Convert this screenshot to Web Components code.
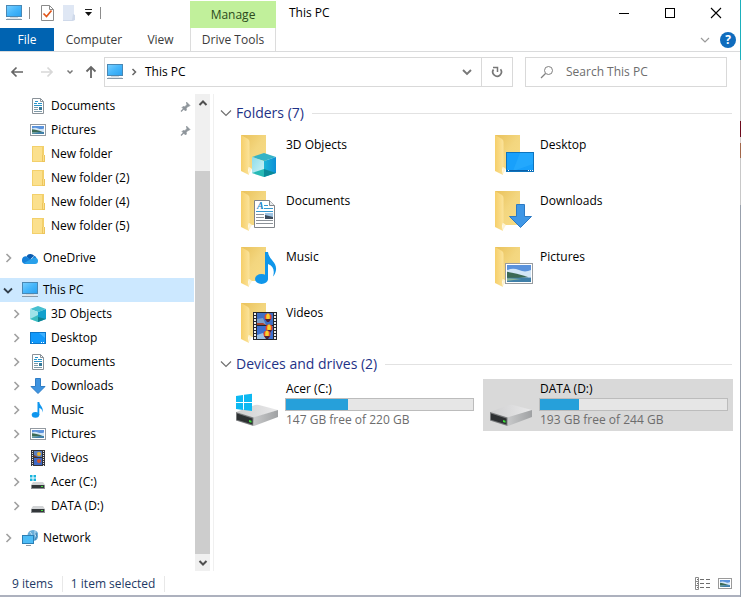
<!DOCTYPE html>
<html lang="en">
<head>
<meta charset="utf-8">
<title>This PC</title>
<style>
  body { margin: 0; background: #fff; font: 12px/16px "Open Sans", "Noto Sans", sans-serif; color: #000; }
</style>
</head>
<body>
<explorer-window>
  <title-bar slot="title" heading="This PC"></title-bar>
  <ribbon-tabs slot="ribbon"></ribbon-tabs>
  <address-row slot="address" place="This PC"></address-row>

  <nav-pane slot="nav">
    <nav-group>
      <nav-item level="2" icon="documents" pinned>Documents</nav-item>
      <nav-item level="2" icon="pictures" pinned>Pictures</nav-item>
      <nav-item level="2" icon="folder">New folder</nav-item>
      <nav-item level="2" icon="folder">New folder (2)</nav-item>
      <nav-item level="2" icon="folder">New folder (4)</nav-item>
      <nav-item level="2" icon="folder">New folder (5)</nav-item>
    </nav-group>
    <nav-group>
      <nav-item icon="onedrive" state="closed">OneDrive</nav-item>
    </nav-group>
    <nav-group>
      <nav-item icon="pc" state="open" selected>This PC</nav-item>
      <nav-item level="2" icon="objects" state="closed">3D Objects</nav-item>
      <nav-item level="2" icon="desktop" state="closed">Desktop</nav-item>
      <nav-item level="2" icon="documents" state="closed">Documents</nav-item>
      <nav-item level="2" icon="downloads" state="closed">Downloads</nav-item>
      <nav-item level="2" icon="music" state="closed">Music</nav-item>
      <nav-item level="2" icon="pictures" state="closed">Pictures</nav-item>
      <nav-item level="2" icon="videos" state="closed">Videos</nav-item>
      <nav-item level="2" icon="sysdrive" state="closed">Acer (C:)</nav-item>
      <nav-item level="2" icon="drive" state="closed">DATA (D:)</nav-item>
    </nav-group>
    <nav-group>
      <nav-item icon="network" state="closed">Network</nav-item>
    </nav-group>
  </nav-pane>

  <item-group heading="Folders (7)">
    <folder-tile icon="objects-lg">3D Objects</folder-tile>
    <folder-tile icon="desktop-lg">Desktop</folder-tile>
    <folder-tile icon="documents-lg">Documents</folder-tile>
    <folder-tile icon="downloads-lg">Downloads</folder-tile>
    <folder-tile icon="music-lg">Music</folder-tile>
    <folder-tile icon="pictures-lg">Pictures</folder-tile>
    <folder-tile icon="videos-lg">Videos</folder-tile>
  </item-group>
  <item-group heading="Devices and drives (2)">
    <drive-tile icon="sysdrive-lg" used="33">Acer (C:)<span slot="info">147 GB free of 220 GB</span></drive-tile>
    <drive-tile icon="drive-lg" used="21" selected>DATA (D:)<span slot="info">193 GB free of 244 GB</span></drive-tile>
  </item-group>

  <status-bar slot="status"><span>9 items</span><span>1 item selected</span></status-bar>
</explorer-window>

<script>
const folderBack = `
  <defs>
    <linearGradient id="fb" x1="0" y1="0" x2="1" y2="1"><stop offset="0" stop-color="#e9c15a"/><stop offset=".5" stop-color="#f3d67f"/><stop offset="1" stop-color="#f8dc86"/></linearGradient>
    <linearGradient id="ff" x1="0" y1="0" x2="1" y2="0"><stop offset="0" stop-color="#f6cf69"/><stop offset="1" stop-color="#fbe39b"/></linearGradient>
  </defs>
  <path d="M8 5H33V39H16z" fill="url(#fb)"/>
  <path d="M15 36l4 3-3 5z" fill="#fdf4d4"/>
  <path d="M8 5l7 4q1.500 1 1.500 3V36q-1.500 1-1.500 4l1 5-8-4z" fill="url(#ff)"/>`;

const driveBody = `
  <defs>
    <linearGradient id="dt" x1="0" y1="0" x2="1" y2="0"><stop offset="0" stop-color="#cfcfd0"/><stop offset="1" stop-color="#e9e9ea"/></linearGradient>
    <linearGradient id="ds" x1="0" y1="0" x2="1" y2="0"><stop offset="0" stop-color="#c9cacb"/><stop offset="1" stop-color="#9fa1a3"/></linearGradient>
  </defs>
  <path d="M3 31L22 24Q24 23.500 26 24L45 29 21 37z" fill="url(#dt)"/>
  <path d="M20 36.500L45 29V36L21 45z" fill="url(#ds)"/>
  <path d="M3 31L20.500 36.500V45L3 39.500z" fill="#77797b"/>
  <path d="M4 32.500L19.500 37.500V43.500L4 38.700z" fill="#2d3032"/>
  <path d="M16 39l2.500.8v2L16 41z" fill="#3fe03a"/>`;

const picScene = (x, y, w, h) => `
  <rect x="${x}" y="${y}" width="${w}" height="${h}" fill="#5b93dc"/>
  <path d="M${x} ${y + h * .3}q${w * .25} ${-h * .15} ${w * .5} 0t${w * .5} 0v${h * .45}h${-w}z" fill="#d3e6f7"/>
  <path d="M${x} ${y + h * .4}q${w * .3} ${h * .05} ${w * .9} ${h * .32}l${-w * .9} ${h * .1}z" fill="#3c6a55"/>
  <path d="M${x} ${y + h * .75}h${w}v${h * .25}h${-w}z" fill="#3f7fa8"/>
  <path d="M${x} ${y + h * .78}l${w * .6} ${h * .05}l${-w * .6} ${h * .1}z" fill="#8fb79c"/>`;

const smallDrive = `
  <path d="M3 8h10l2 3H1z" fill="#d2d4d6"/>
  <rect x="1" y="11" width="14" height="4" fill="#8e9194"/>
  <rect x="2" y="11" width="12" height="3" fill="#33373a"/>
  <rect x="11" y="12" width="2" height="1" fill="#42e03c"/>`;

const balloon = (x, y) => `
  <circle cx="${x}" cy="${y}" r="3.500" fill="#e8462b"/>
  <ellipse cx="${x}" cy="${y}" rx="1.800" ry="3.500" fill="#f7d22c"/>
  <path d="M${x - 3} ${y + 2}L${x - 1} ${y + 5}H${x + 1}L${x + 3} ${y + 2}z" fill="#4b2138"/>`;

const ICONS = {
  pc: [16, 16, `
    <defs><linearGradient id="g" x1="0" y1="0" x2="1" y2="1"><stop offset="0" stop-color="#7bd0ff"/><stop offset=".5" stop-color="#45b6fb"/><stop offset="1" stop-color="#2aa1f0"/></linearGradient></defs>
    <rect x=".5" y=".5" width="15" height="11" fill="url(#g)" stroke="#4a88b4"/>
    <path d="M4 12.500h8" stroke="#cfd8df"/><path d="M1 13.500h14" stroke="#dfe5ea"/><path d="M0 14.500h16" stroke="#8799a8"/>`],
  check: [16, 18, `
    <path d="M2.500 1.500h8l4 4v11h-12z" fill="#fff" stroke="#8b8b8b"/><path d="M10.500 1.500v4h4" fill="none" stroke="#8b8b8b"/>
    <path d="M4.500 9.500l3 3 5-6" fill="none" stroke="#e2571b" stroke-width="1.700"/>`],
  blank: [16, 18, `
    <path d="M2 1h11v13l-1 2H2z" fill="#dfe7f4"/><path d="M12 10l2 1v5l-2 1H2v-1h9z" fill="#cfd9ea"/>`],
  custom: [9, 8, `<path d="M1 .5h7" stroke="#222"/><path d="M1 3h7L4.500 7z" fill="#111"/>`],
  min: [12, 12, `<path d="M1 6.500h10" stroke="#000"/>`],
  max: [12, 12, `<rect x="1.500" y="1.500" width="9" height="9" fill="none" stroke="#000"/>`],
  close: [12, 12, `<path d="M1 1l10 10M11 1L1 11" stroke="#000" stroke-width="1.100"/>`],
  back: [14, 12, `<path d="M13 6H2M6.500 1.500L2 6l4.500 4.500" fill="none" stroke="#666" stroke-width="1.700"/>`],
  forward: [14, 12, `<path d="M1 6h11M7.500 1.500L12 6l-4.500 4.500" fill="none" stroke="#d8d8d8" stroke-width="1.700"/>`],
  up: [12, 14, `<path d="M6 13V2M1.500 6.500L6 2l4.500 4.500" fill="none" stroke="#666" stroke-width="1.800"/>`],
  tinydown: [8, 6, `<path d="M1.500 1.500L4 4l2.500-2.500" fill="none" stroke="#777" stroke-width="1.500"/>`],
  down: [10, 8, `<path d="M1 2l4 4 4-4" fill="none" stroke="#777" stroke-width="1.900"/>`],
  downlight: [10, 8, `<path d="M1 2l4 4 4-4" fill="none" stroke="#9a9a9a" stroke-width="1.200"/>`],
  refresh: [12, 12, `<path d="M2.500 3.500A4.300 4.300 0 1 0 9.500 3.300" fill="none" stroke="#777" stroke-width="1.700"/><path d="M2 1.500h4.500V6" fill="none" stroke="#777" stroke-width="1.500"/>`],
  search: [14, 14, `<circle cx="8.500" cy="5.500" r="4" fill="none" stroke="#808080"/><path d="M5.500 8.500L1 13" stroke="#808080" stroke-width="1.200"/>`],
  crumb: [6, 8, `<path d="M1.500 1L4.500 4l-3 3" fill="none" stroke="#666" stroke-width="1.500"/>`],
  closed: [7, 10, `<path d="M1.500 1L5.500 5l-4 4" fill="none" stroke="#a0a0a0" stroke-width="1.600"/>`],
  open: [10, 7, `<path d="M1 1.500l4 4 4-4" fill="none" stroke="#333f4b" stroke-width="1.800"/>`],
  group: [12, 8, `<path d="M1 1.500l5 5 5-5" fill="none" stroke="#707070" stroke-width="1.200"/>`],
  scrollup: [10, 8, `<path d="M1.500 6L5 2.500 8.500 6" fill="none" stroke="#505050" stroke-width="2"/>`],
  scrolldown: [10, 8, `<path d="M1.500 2L5 5.500 8.500 2" fill="none" stroke="#505050" stroke-width="2"/>`],
  pin: [11, 11, `<path d="M6.500 1L10 4.500l-1 1-.7-.3-2 2 .2 1.800-1 1L2 6.500l1-1 1.800.2 2-2-.3-1.700z" fill="#8e959b" stroke="#8e959b" stroke-width=".6"/><path d="M4 7.500L1 10.500" stroke="#8e959b" stroke-width="1.200"/>`],
  folder: [16, 16, `<rect x="2" y="0" width="12" height="16" fill="#f3d06b"/><rect x="3" y="1" width="9" height="14" fill="#fbe08d"/><path d="M12 9h3v7h-3z" fill="#edc55c"/><path d="M13.500 9v6" stroke="#fbe08d"/>`],
  documents: [16, 16, `<path d="M2.500 .5h8l3 3v12h-11z" fill="#fff" stroke="#8a9299"/><path d="M10.500 .5v3h3" fill="none" stroke="#8a9299"/>
    <path d="M5 3.500h3M4 5.500h3M8 5.500h4M4 7.500h8" stroke="#2a94c9"/><path d="M4 9.500h4M4 11.500h4M4 13.500h8" stroke="#7f9aa8"/><rect x="9" y="9" width="3" height="3" fill="#35799a"/>`],
  pictures: [16, 16, `<rect x=".5" y="2.500" width="15" height="11" fill="#fff" stroke="#939aa1"/>${picScene(2, 4, 12, 8)}`],
  onedrive: [16, 16, `<path d="M4.500 6.500a4.300 4.300 0 0 1 7.500-.7l-4 4z" fill="#0a5cb0"/><path d="M12 5.800a3.600 3.600 0 0 1 2.500 2.400L9 11z" fill="#1478d0"/><path d="M0 10a3.500 3.500 0 0 1 4.500-3.500L11 11l-3 3H3.500A3.700 3.700 0 0 1 0 10z" fill="#1580d8"/><path d="M2 13l9-5a3.300 3.300 0 0 1 5 3 3 3 0 0 1-3 3H4z" fill="#28a0ea"/>`],
  objects: [16, 16, `<path d="M0 3l8-3 8 3-8 3z" fill="#46bfd0"/><path d="M0 3l8 3v10l-8-3z" fill="#9fe3e8"/><path d="M0 13l8-4v7z" fill="#3bbcc0"/><path d="M8 6l8-3v10l-8 3z" fill="#12a0cc"/><path d="M8 16v-5l8 2z" fill="#0e8492"/>`],
  desktop: [16, 16, `<rect x=".5" y="2.500" width="15" height="11" fill="#1199fb" stroke="#0b76c9"/><path d="M9 3h6v5z" fill="#3db0ff"/><path d="M2 12.500h1M11 12.500h1M13 12.500h1" stroke="#fff"/>`],
  downloads: [16, 16, `<path d="M5.500 .5h5v8h4.500L8 15.500 1 8.500h4.500z" fill="#3f94e0" stroke="#2f7dc6"/>`],
  music: [16, 16, `<ellipse cx="5.500" cy="12.800" rx="3.800" ry="2.900" fill="#0f96ee"/><path d="M7.500 0h1.800C9.500 3.500 14 5 12.500 10.500 12.300 7.500 11 6.500 9.300 6V13H7.500z" fill="#0f96ee"/>`],
  videos: [16, 16, `<rect x="1" y="0" width="14" height="16" fill="#33343a"/><rect x="4" y="1" width="8" height="6" fill="#5b7fbf"/><rect x="4" y="8" width="8" height="7" fill="#3f69c4"/><circle cx="9" cy="4" r="2" fill="#e9b32c"/><circle cx="9" cy="11" r="2" fill="#d2562b"/><path d="M4 5l4 2H4z" fill="#7d3f2e"/><path d="M2.500 1v15M13.500 1v15" stroke="#e8e8e8" stroke-dasharray="1 1"/>`],
  drive: [16, 16, smallDrive],
  sysdrive: [16, 16, `<path d="M0 1h2.500v2.500H0zM3.500 1H6v2.500H3.500zM0 4.500h2.500V7H0zM3.500 4.500H6V7H3.500z" fill="#18b4dd"/>${smallDrive}`],
  network: [16, 16, `<circle cx="11" cy="5.500" r="5.500" fill="#6aaed9"/><path d="M8 2q3 2 1 5M13 1q-1 4 2 7" fill="none" stroke="#c4e2f3"/><path d="M14 3q2 4-1 7" fill="none" stroke="#3c7fae"/><rect x=".5" y="5.500" width="11" height="8" fill="#4dbcf6" stroke="#2c7fb4"/><path d="M4 15.500h5" stroke="#8b98a3"/>`],
  details: [17, 14, `<path d="M1.500 .5h3v12h-3zM1 4.500h4M1 8.500h4" fill="none" stroke="#8c8c8c"/><path d="M3 2.500h1M3 6.500h1M3 10.500h1M6 2.500h4M12 2.500h4M6 6.500h4M12 6.500h4M6 10.500h4M12 10.500h4" stroke="#6e6e6e"/>`],
  thumbs: [14, 14, `<rect x=".5" y="1.500" width="13" height="10" fill="#fff" stroke="#9a9a9a"/>${picScene(2, 3, 10, 7)}`],

  "objects-lg": [48, 48, `${folderBack}
    <defs><linearGradient id="cl" x1="0" y1="0" x2="1" y2="1"><stop offset="0" stop-color="#8edceb"/><stop offset="1" stop-color="#d2f5f6"/></linearGradient><linearGradient id="cr" x1="0" y1="0" x2="1" y2="0"><stop offset="0" stop-color="#1cb5d8"/><stop offset="1" stop-color="#0c8fd6"/></linearGradient></defs>
    <path d="M19 27l12-4 12 4-12 4z" fill="#35b3c6"/><path d="M19 27l12 4v16l-12-4z" fill="url(#cl)"/><path d="M31 31l12-4v16l-12 4z" fill="url(#cr)"/><path d="M19 43l12-4v8z" fill="#27b9b5"/><path d="M31 39l12 4-12 4z" fill="#0a8a98"/>`],
  "documents-lg": [48, 48, `${folderBack}
    <path d="M21.500 14.500h15l5 5v22h-20z" fill="#fff" stroke="#808489"/><path d="M36.500 14.500v5h5" fill="#e8eaec" stroke="#808489"/>
    <text x="24" y="23" font-family="Liberation Serif, serif" font-style="italic" font-weight="700" font-size="10" fill="#1a86c8">A</text>
    <path d="M31 19.500h4M31 22.500h9M23 25.500h17" stroke="#3498cf"/>
    <path d="M23 28.500h8M23 31.500h8M23 34.500h17M23 37.500h17" stroke="#8c9298"/>
    <rect x="32" y="27" width="8" height="6" fill="#9ec3e2"/><path d="M32 29l8 2v2h-8z" fill="#3c4c5c"/>`],
  "desktop-lg": [48, 48, `${folderBack}
    <rect x="19.500" y="22.500" width="27" height="19" fill="#18a0fb" stroke="#0d74be"/><path d="M33 23h13v11L26 41z" fill="#2badff" opacity=".6"/><path d="M20 40.500h26" stroke="#0a5fa8"/><path d="M21 40.500h1M41 40.500h1M43 40.500h1M45 40.500h1" stroke="#fff"/>`],
  "downloads-lg": [48, 48, `${folderBack}
    <path d="M29.500 18.500h8v12h7L33.500 41.500 22.500 30.500h7z" fill="#3f97e6" stroke="#2c7ac4"/>`],
  "music-lg": [48, 48, `${folderBack}
    <ellipse cx="28.500" cy="37" rx="6.500" ry="5" fill="#0f96ea"/><path d="M32 10h3C36 18 44 20 43 28 42.500 31 41.500 33 40 34.500 42 28 40 24 35 22V37.500h-3z" fill="#0f96ea"/>`],
  "pictures-lg": [48, 48, `${folderBack}
    <rect x="18.500" y="21.500" width="27" height="20" fill="#fff" stroke="#989ca0"/>${picScene(20, 23, 24, 17)}`],
  "videos-lg": [48, 48, `${folderBack}
    <rect x="20" y="14" width="24" height="28" fill="#24262c"/><rect x="24" y="15" width="16" height="12" fill="#3f6fc4"/><rect x="24" y="28" width="16" height="13" fill="#3b6fd0"/>
    <path d="M24 21l6-1 3 7H24z" fill="#7b9fc9"/><path d="M24 37l6-2 5 6H24z" fill="#9cc0e4"/><path d="M24 25h6l3 2h-9z" fill="#a8442e"/>${balloon(35, 19)}${balloon(36, 30)}${balloon(34, 36)}
    <path d="M22 15v27M42 15v27" stroke="#eeeeee" stroke-width="2" stroke-dasharray="2 1"/>`],
  "drive-lg": [48, 48, driveBody],
  "sysdrive-lg": [48, 48, `${driveBody}<path d="M3 15l7-1v7H3zM11 13.800l8-1V21h-8zM3 22h7v7l-7-1zM11 22h8v8l-8-1z" fill="#0db9f2"/>`],
};

function define(name, template, setup) {
  customElements.define(name, class extends HTMLElement {
    constructor() { super(); this.attachShadow({ mode: "open" }); }
    connectedCallback() {
      if (this.shadowRoot.childNodes.length) return;
      this.shadowRoot.innerHTML = `<style>:host,*{box-sizing:border-box}button{font:inherit;color:inherit;background:none;border:0;padding:0;margin:0;cursor:pointer}</style>` + template(this);
      if (setup) setup(this);
    }
  });
}

define("ui-icon", el => {
  const [w, h, art] = ICONS[el.getAttribute("name")];
  return `<style>:host{display:block;flex:none}svg{display:block}</style>
    <svg width="${w}" height="${h}" viewBox="0 0 ${w} ${h}" aria-hidden="true">${art}</svg>`;
});

define("explorer-window", () => `
  <style>
    :host { display: grid; grid-template-columns: minmax(0,1fr) 1px; min-height: 100vh; }
    .frame { display: flex; flex-direction: column; background: #fff; border-bottom: 2px solid #adb1be; }
    .edge { background: linear-gradient(#1bb0bd 0 60px, #c8c8c8 60px 121px, #6d0a1c 121px 137px, #d8d0d0 137px 143px, #a2674a 143px 158px, #c8c8c8 158px 205px, #98a0ac 205px); }
    .body { flex: 1; display: grid; grid-template-columns: 214px minmax(0,1fr); padding-top: 2px; }
    main { padding: 4px 7px 0 15px; display: flex; flex-direction: column; gap: 1px; }
  </style>
  <div class="frame">
    <slot name="title"></slot>
    <slot name="ribbon"></slot>
    <slot name="address"></slot>
    <div class="body"><slot name="nav"></slot><main><slot></slot></main></div>
    <slot name="status"></slot>
  </div>
  <div class="edge"></div>`);

define("title-bar", el => `
  <style>
    :host { display: flex; height: 28px; }
    .quick { display: flex; align-items: center; width: 190px; padding: 0 0 2px 6px; }
    .sep { width: 1px; height: 12px; background: #8c8c8c; }
    .context { width: 86px; margin-top: 1px; padding-top: 1px; background: #c1f09b; color: #2c4a1c; text-align: center; line-height: 26px; }
    h1 { flex: 1; margin: 0; padding-left: 13px; font: inherit; line-height: 26px; }
    .caption { display: flex; height: 25px; padding-right: 1px; }
    .caption button { width: 46px; display: grid; place-items: center; }
    .a { margin: 0 9px 0 7px; } .b { margin-right: 6px; } .c { margin: 0 7px 0 7px; }
  </style>
  <div class="quick">
    <ui-icon name="pc"></ui-icon><span class="sep a"></span>
    <button class="b" aria-label="Properties"><ui-icon name="check"></ui-icon></button>
    <button aria-label="New folder"><ui-icon name="blank"></ui-icon></button>
    <button class="c" aria-label="Customize Quick Access Toolbar"><ui-icon name="custom"></ui-icon></button>
    <span class="sep"></span>
  </div>
  <div class="context">Manage</div>
  <h1>${el.getAttribute("heading")}</h1>
  <div class="caption">
    <button aria-label="Minimize"><ui-icon name="min"></ui-icon></button>
    <button aria-label="Maximize"><ui-icon name="max"></ui-icon></button>
    <button aria-label="Close"><ui-icon name="close"></ui-icon></button>
  </div>`);

define("ribbon-tabs", () => `
  <style>
    :host { display: flex; align-items: stretch; height: 24px; border-bottom: 1px solid #dadbdc; color: #3b3b3b; }
    button { padding-top: 1px; }
    .file { width: 54px; background: #0063b1; color: #fff; }
    .computer { width: 80px; } .view { width: 53px; margin-right: 3px; }
    .tools { width: 86px; border: solid #dcdcdc; border-width: 0 1px; }
    .end { margin-left: auto; display: flex; align-items: center; gap: 10px; padding-right: 4px; }
    .end button { padding: 0; }
    .help { width: 16px; height: 16px; border-radius: 50%; background: #0f6cbd; color: #fff; font-weight: 700; line-height: 16px; }
  </style>
  <button class="file">File</button>
  <button class="computer">Computer</button>
  <button class="view">View</button>
  <button class="tools">Drive Tools</button>
  <div class="end">
    <button aria-label="Expand the Ribbon"><ui-icon name="downlight"></ui-icon></button>
    <button class="help" aria-label="Help">?</button>
  </div>`);

define("address-row", el => `
  <style>
    :host { display: flex; align-items: center; height: 40px; padding: 0 13px 0 10px; }
    .back { margin-right: 16px; } .forward { margin-right: 12px; } .recent { margin-right: 11px; } .up { margin-right: 7px; }
    .box { display: flex; align-items: center; height: 30px; border: 1px solid #d9d9d9; background: #fff; }
    .path { flex: 2 1 409px; min-width: 0; padding-left: 2px; }
    .path > ui-icon { margin-right: 8px; }
    .path .place { margin-right: auto; }
    .down { width: 28px; height: 28px; }
    .refresh { width: 31px; height: 28px; border-left: 1px solid #d9d9d9; }
    .down, .refresh { display: grid; place-items: center; }
    .search { flex: 1 1 202px; min-width: 0; margin-left: 12px; padding-left: 14px; gap: 12px; }
    input { flex: 1; min-width: 0; border: 0; outline: 0; padding: 0; font: inherit; background: none; }
    input::placeholder { color: #6d6d6d; opacity: 1; }
  </style>
  <button class="back" aria-label="Back"><ui-icon name="back"></ui-icon></button>
  <button class="forward" aria-label="Forward"><ui-icon name="forward"></ui-icon></button>
  <button class="recent" aria-label="Recent locations"><ui-icon name="tinydown"></ui-icon></button>
  <button class="up" aria-label="Up"><ui-icon name="up"></ui-icon></button>
  <div class="box path">
    <ui-icon name="pc"></ui-icon><ui-icon name="crumb"></ui-icon>
    <button class="place">${el.getAttribute("place")}</button>
    <button class="down" aria-label="Previous locations"><ui-icon name="down"></ui-icon></button>
    <button class="refresh" aria-label="Refresh"><ui-icon name="refresh"></ui-icon></button>
  </div>
  <label class="box search"><ui-icon name="search"></ui-icon><input type="text" aria-label="Search" placeholder="Search ${el.getAttribute("place")}"></label>`);

define("nav-pane", () => `
  <style>
    :host { display: grid; grid-template-columns: 194px 16px; column-gap: 1px; border-right: 1px solid #f0f0f0; }
    nav { display: flex; flex-direction: column; gap: 8px; }
    .bar { display: flex; flex-direction: column; background: #f0f0f0; width: 15px; }
    .bar button { height: 17px; display: grid; place-items: center; }
    .track { flex: 1; display: flex; flex-direction: column; padding-top: 60px; }
    .thumb { flex: 1; background: #cdcdcd; }
  </style>
  <nav aria-label="Navigation pane"><slot></slot></nav>
  <div class="bar">
    <button aria-label="Scroll up"><ui-icon name="scrollup"></ui-icon></button>
    <div class="track"><div class="thumb"></div></div>
    <button aria-label="Scroll down"><ui-icon name="scrolldown"></ui-icon></button>
  </div>`);

define("nav-group", () => `<style>:host{display:block}</style><slot></slot>`);

define("nav-item", el => `
  <style>
    :host { display: block; }
    a { display: flex; align-items: center; height: 24px; padding-right: 3px; color: #000; text-decoration: none; }
    :host([level="2"]) a { padding-left: 8px; }
    :host([selected]) a { background: #cce8ff; }
    .twist { width: 16px; margin-right: 6px; display: grid; place-items: center; }
    .label { flex: 1; margin-left: 5px; white-space: nowrap; }
  </style>
  <a href="#"><span class="twist">${el.getAttribute("state") ? `<ui-icon name="${el.getAttribute("state")}"></ui-icon>` : ""}</span>
    <ui-icon name="${el.getAttribute("icon")}"></ui-icon><span class="label"><slot></slot></span>
    ${el.hasAttribute("pinned") ? `<ui-icon name="pin"></ui-icon>` : ""}</a>`);

define("item-group", el => `
  <style>
    :host { display: block; }
    header { display: flex; align-items: center; height: 30px; margin-left: -9px; gap: 4px; }
    h2 { margin: 0; font-size: 14px; line-height: 20px; font-weight: 400; color: #1e3287; white-space: nowrap; }
    hr { flex: 1; margin: 0 1px 0 4px; border: 0; height: 1px; background: #e2e2e2; }
    .grid { display: grid; grid-template-columns: repeat(auto-fill, minmax(240px, 1fr)); gap: 4px; }
  </style>
  <header><ui-icon name="group"></ui-icon><h2>${el.getAttribute("heading")}</h2><hr></header>
  <div class="grid"><slot></slot></div>`);

define("folder-tile", el => `
  <style>
    :host { display: flex; gap: 5px; height: 52px; padding: 2px 5px 2px 4px; }
    .name { padding-top: 7px; }
  </style>
  <ui-icon name="${el.getAttribute("icon")}"></ui-icon><div class="name"><slot></slot></div>`);

define("drive-tile", el => `
  <style>
    :host { display: flex; gap: 4px; height: 52px; padding: 2px 5px 2px 4px; }
    :host([selected]) { background: #d9d9d9; }
    .text { flex: 1; min-width: 0; }
    .name, .info { padding-left: 1px; }
    .info { color: #6d6d6d; margin-top: 1px; }
    .meter { height: 13px; margin-top: 1px; border: 1px solid #bcbcbc; background: #e6e6e6; }
    .fill { height: 100%; width: ${el.getAttribute("used")}%; background: #26a0da; }
  </style>
  <ui-icon name="${el.getAttribute("icon")}"></ui-icon>
  <div class="text">
    <div class="name"><slot></slot></div>
    <div class="meter" role="meter" aria-label="Space used" aria-valuemin="0" aria-valuemax="100" aria-valuenow="${el.getAttribute("used")}"><div class="fill"></div></div>
    <div class="info"><slot name="info"></slot></div>
  </div>`);

define("status-bar", () => `
  <style>
    :host { display: flex; align-items: center; height: 24px; padding: 2px 8px 0 12px; color: #1e3a66; }
    ::slotted(span) { padding-right: 9px; margin-right: 8px; border-right: 1px solid #e8e8e8; }
    .views { margin-left: auto; display: flex; gap: 7px; }
  </style>
  <slot></slot>
  <div class="views">
    <button aria-label="Details view"><ui-icon name="details"></ui-icon></button>
    <button aria-label="Large icons view"><ui-icon name="thumbs"></ui-icon></button>
  </div>`);
</script>
</body>
</html>
